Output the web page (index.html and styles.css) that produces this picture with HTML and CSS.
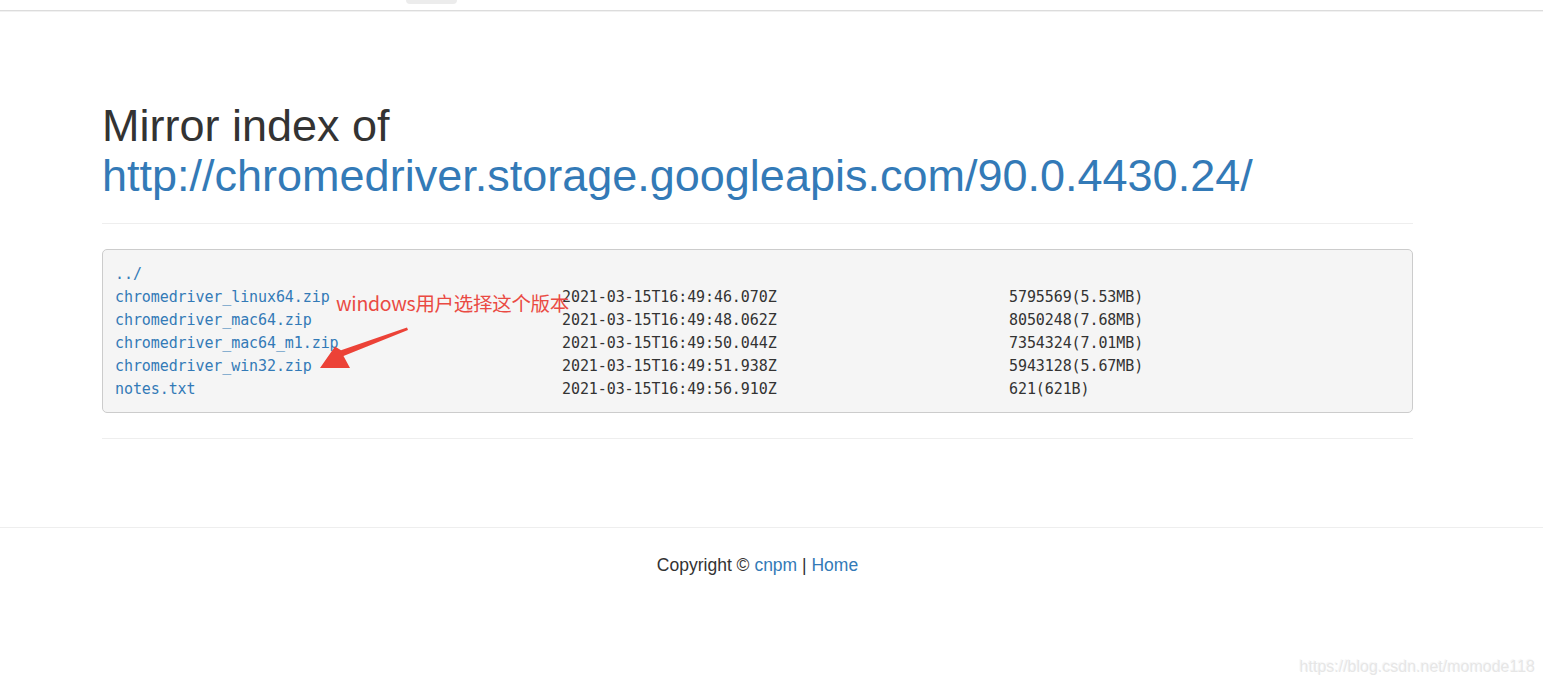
FILE: index.html
```html
<!DOCTYPE html>
<html lang="zh-CN">
<head>
<meta charset="utf-8">
<title>Mirror index of http://chromedriver.storage.googleapis.com/90.0.4430.24/</title>
<link rel="stylesheet" href="styles.css">
</head>
<body>
<div class="topbar"><span class="tab"></span></div>
<div class="container">
  <div class="page-header">
    <h1>Mirror index of <a href="#">http://chromedriver.storage.googleapis.com/90.0.4430.24/</a></h1>
  </div>
  <div class="listing">
    <div class="row"><a href="#">../</a></div>
    <div class="row"><a href="#">chromedriver_linux64.zip</a><span>2021-03-15T16:49:46.070Z</span><span>5795569(5.53MB)</span></div>
    <div class="row"><a href="#">chromedriver_mac64.zip</a><span>2021-03-15T16:49:48.062Z</span><span>8050248(7.68MB)</span></div>
    <div class="row"><a href="#">chromedriver_mac64_m1.zip</a><span>2021-03-15T16:49:50.044Z</span><span>7354324(7.01MB)</span></div>
    <div class="row"><a href="#">chromedriver_win32.zip</a><span>2021-03-15T16:49:51.938Z</span><span>5943128(5.67MB)</span></div>
    <div class="row"><a href="#">notes.txt</a><span>2021-03-15T16:49:56.910Z</span><span>621(621B)</span></div>
    <div class="note">windows用户选择这个版本</div>
    <svg class="arrow" width="110" height="60" viewBox="0 0 110 60">
      <polygon points="97,7.5 31,30.2 25,26.5 10,48 40,48 33.5,36 98,10" fill="#ec4237"/>
    </svg>
  </div>
  <hr class="rule">
</div>
<footer class="footer">
  <div class="footer-inner">Copyright © <a href="#">cnpm</a> | <a href="#">Home</a></div>
</footer>
<div class="watermark">https://blog.csdn.net/momode118</div>
</body>
</html>
```

FILE: styles.css
```css
html, body {
  margin: 0;
  padding: 0;
  background: #fff;
}
body {
  font-family: "Liberation Sans", Arial, sans-serif;
  font-size: 17.5px;
  line-height: 25px;
  color: #333;
  height: 683px;
  position: relative;
  overflow: hidden;
}
a {
  color: #337ab7;
  text-decoration: none;
}
.topbar {
  height: 10px;
  border-bottom: 1px solid #dcdcdc;
  box-shadow: 0 1px 0 #f1f1f1;
  position: relative;
}
.tab {
  position: absolute;
  left: 406px;
  top: 0;
  width: 51px;
  height: 4px;
  background: #ececec;
  border-radius: 0 0 6px 6px;
}
.container {
  width: 1311px;
  margin-left: 102px;
  padding-top: 90px;
}
.page-header {
  padding-bottom: 11px;
  border-bottom: 1px solid #eee;
  margin-bottom: 25px;
}
.page-header h1 {
  margin: 0 0 12px;
  font-size: 45px;
  line-height: 49.5px;
  font-weight: 400;
  color: #333;
}
.listing {
  position: relative;
  background: #f5f5f5;
  border: 1px solid #ccc;
  border-radius: 5px;
  padding: 13px 12px 11px;
  font-family: "DejaVu Sans Mono", "Liberation Mono", monospace;
  font-size: 15px;
  letter-spacing: -0.09px;
  color: #333;
}
.row {
  display: grid;
  grid-template-columns: 447px 447px auto;
  height: 23px;
  line-height: 23px;
  white-space: pre;
}
.note {
  position: absolute;
  left: 233px;
  top: 41px;
  font-family: "Noto Sans CJK SC", "Noto Sans", sans-serif;
  font-size: 19.5px;
  line-height: 24px;
  letter-spacing: -0.3px;
  color: #ea4a43;
  white-space: nowrap;
}
.arrow {
  position: absolute;
  left: 207px;
  top: 70px;
}
.rule {
  border: 0;
  border-top: 1px solid #eee;
  margin: 25px 0 0;
  height: 0;
}
.footer {
  margin-top: 88px;
  border-top: 1px solid #eee;
  padding-top: 25px;
}
.footer-inner {
  width: 1311px;
  margin-left: 102px;
  text-align: center;
}
.watermark {
  position: absolute;
  right: 8px;
  bottom: 6px;
  font-family: "Liberation Sans", Arial, sans-serif;
  font-size: 16px;
  line-height: 20px;
  color: #e6e6e6;
  text-shadow: 1px 1px 1px #fff, -1px -1px 1px #f4f4f4;
}
```
